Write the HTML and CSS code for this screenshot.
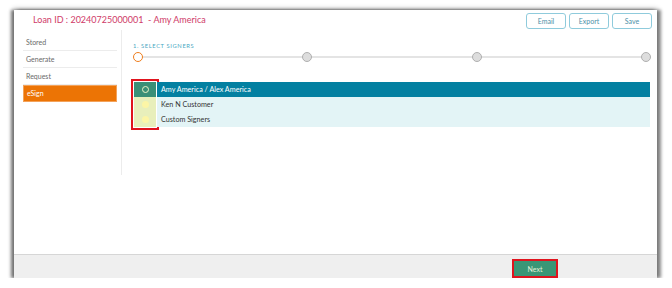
FILE: index.html
```html
<!DOCTYPE html>
<html lang="en">
<head>
    <meta charset="UTF-8">
    <meta name="viewport" content="width=device-width, initial-scale=1.0">
    <title>Loan eSign</title>
    <link rel="stylesheet" href="styles.css">
</head>
<body>
    <div class="window">
        <!-- Header -->
        <div class="header">
            <h2 class="loan-title">Loan ID : 20240725000001&nbsp; - Amy America</h2>
            <div class="actions">
                <button class="btn-outline">Email</button>
                <button class="btn-outline">Export</button>
                <button class="btn-outline">Save</button>
            </div>
        </div>

        <div class="main">
            <!-- Side Navigation -->
            <div class="sidebar">
                <ul class="nav">
                    <li>Stored</li>
                    <li>Generate</li>
                    <li>Request</li>
                    <li class="active">eSign</li>
                </ul>
            </div>

            <!-- Signers -->
            <div class="content">
                <div class="step-label">1. Select Signers</div>
                <div class="stepper">
                    <span class="dot current"></span>
                    <span class="dot"></span>
                    <span class="dot"></span>
                    <span class="dot"></span>
                </div>

                <div class="signers">
                    <div class="radio-col">
                        <div class="radio-cell selected"><span class="radio"></span></div>
                        <div class="radio-cell"><span class="radio"></span></div>
                        <div class="radio-cell"><span class="radio"></span></div>
                    </div>
                    <div class="name-col">
                        <div class="name-cell selected">Amy America / Alex America</div>
                        <div class="name-cell">Ken N Customer</div>
                        <div class="name-cell">Custom Signers</div>
                    </div>
                </div>
            </div>
        </div>

        <!-- Footer -->
        <div class="footer">
            <button class="btn-next">Next</button>
        </div>
    </div>
</body>
</html>
```

FILE: styles.css
```css
/* General Styling */
body {
    font-family: 'Lato', 'Open Sans', sans-serif;
    background: #fff;
    margin: 0;
    padding: 0;
    color: #444;
}
.window {
    margin: 10px 0 0 14px;
    width: 643px;
    height: 268px;
    background: #fff;
    display: flex;
    flex-direction: column;
    box-shadow: -3px 0 3px rgba(0, 0, 0, 0.45), 4px 0 3px rgba(0, 0, 0, 0.4), 0 0 5px 1px rgba(0, 0, 0, 0.3);
}

/* Header */
.header {
    height: 20px;
    display: flex;
    align-items: flex-start;
    justify-content: space-between;
    padding: 0 5px 0 19px;
}
.loan-title {
    margin: 4px 0 0;
    font-size: 9px;
    font-weight: normal;
    color: #cf3b68;
}
.actions {
    display: flex;
    gap: 3px;
    margin-top: 3px;
}
.btn-outline {
    width: 40px;
    height: 16px;
    padding: 0;
    background: #fff;
    border: 1px solid #8fcbdc;
    border-radius: 3px;
    font-family: inherit;
    font-size: 7px;
    color: #4d8fa8;
}

/* Main area */
.main {
    flex: 1;
    display: flex;
    align-items: flex-start;
}
.sidebar {
    width: 94px;
    height: 141px;
    padding: 4px 4px 0 9px;
    border-right: 1px solid #ececec;
}
.nav {
    list-style: none;
    margin: 0;
    padding: 0;
}
.nav li {
    height: 16px;
    line-height: 16px;
    padding-left: 3px;
    font-size: 7px;
    color: #6a6a6a;
    border-bottom: 1px solid #ececec;
}
.nav li.active {
    background: #ec7405;
    color: #fff;
    border: 1px solid #f3a25a;
    height: 15px;
    line-height: 15px;
}

/* Content */
.content {
    flex: 1;
    padding: 12px 6px 0 11px;
}
.step-label {
    font-size: 5.8px;
    text-transform: uppercase;
    letter-spacing: 0.6px;
    color: #4aa8c2;
    height: 9px;
}
.stepper {
    position: relative;
    display: flex;
    justify-content: space-between;
    height: 11px;
    margin-top: 1px;
}
.stepper::before {
    content: "";
    position: absolute;
    left: 4px;
    right: 4px;
    top: 4px;
    height: 2px;
    background: #e4e4e4;
}
.dot {
    position: relative;
    width: 8px;
    height: 8px;
    border-radius: 50%;
    background: #ddd;
    border: 1.5px solid #b0b0b0;
}
.dot.current {
    background: #fff;
    border-color: #ef7d1c;
}

/* Signers table */
.signers {
    display: flex;
    margin-top: 19px;
    margin-right: 1px;
}
.radio-col {
    width: 22px;
    margin-left: 1px;
    outline: 2px solid #e0141e;
    outline-offset: 1px;
}
.radio-cell {
    height: 15px;
    background: #e8efbb;
    display: flex;
    align-items: center;
    justify-content: center;
}
.radio-cell.selected {
    background: #3a8f77;
}
.radio {
    width: 7px;
    height: 7px;
    border-radius: 50%;
    background: #fcf5a6;
}
.radio-cell.selected .radio {
    width: 5px;
    height: 5px;
    background: #3a8f77;
    border: 1.5px solid #eef5c8;
}
.name-col {
    flex: 1;
    margin-left: 1px;
}
.name-cell {
    height: 15px;
    line-height: 15px;
    padding-left: 4px;
    font-size: 7.2px;
    color: #333;
    background: #e3f4f6;
}
.name-cell.selected {
    background: #0380a1;
    color: #fff;
}

/* Footer */
.footer {
    height: 23px;
    background: #efefef;
    border-top: 1px solid #d6d6d6;
    display: flex;
    justify-content: flex-end;
    align-items: flex-end;
    padding-right: 99px;
}
.btn-next {
    width: 46px;
    height: 19px;
    padding: 0;
    background: #3a9676;
    border: 2px solid #e0141e;
    font-family: inherit;
    font-size: 7px;
    color: #e4f2da;
}
```
